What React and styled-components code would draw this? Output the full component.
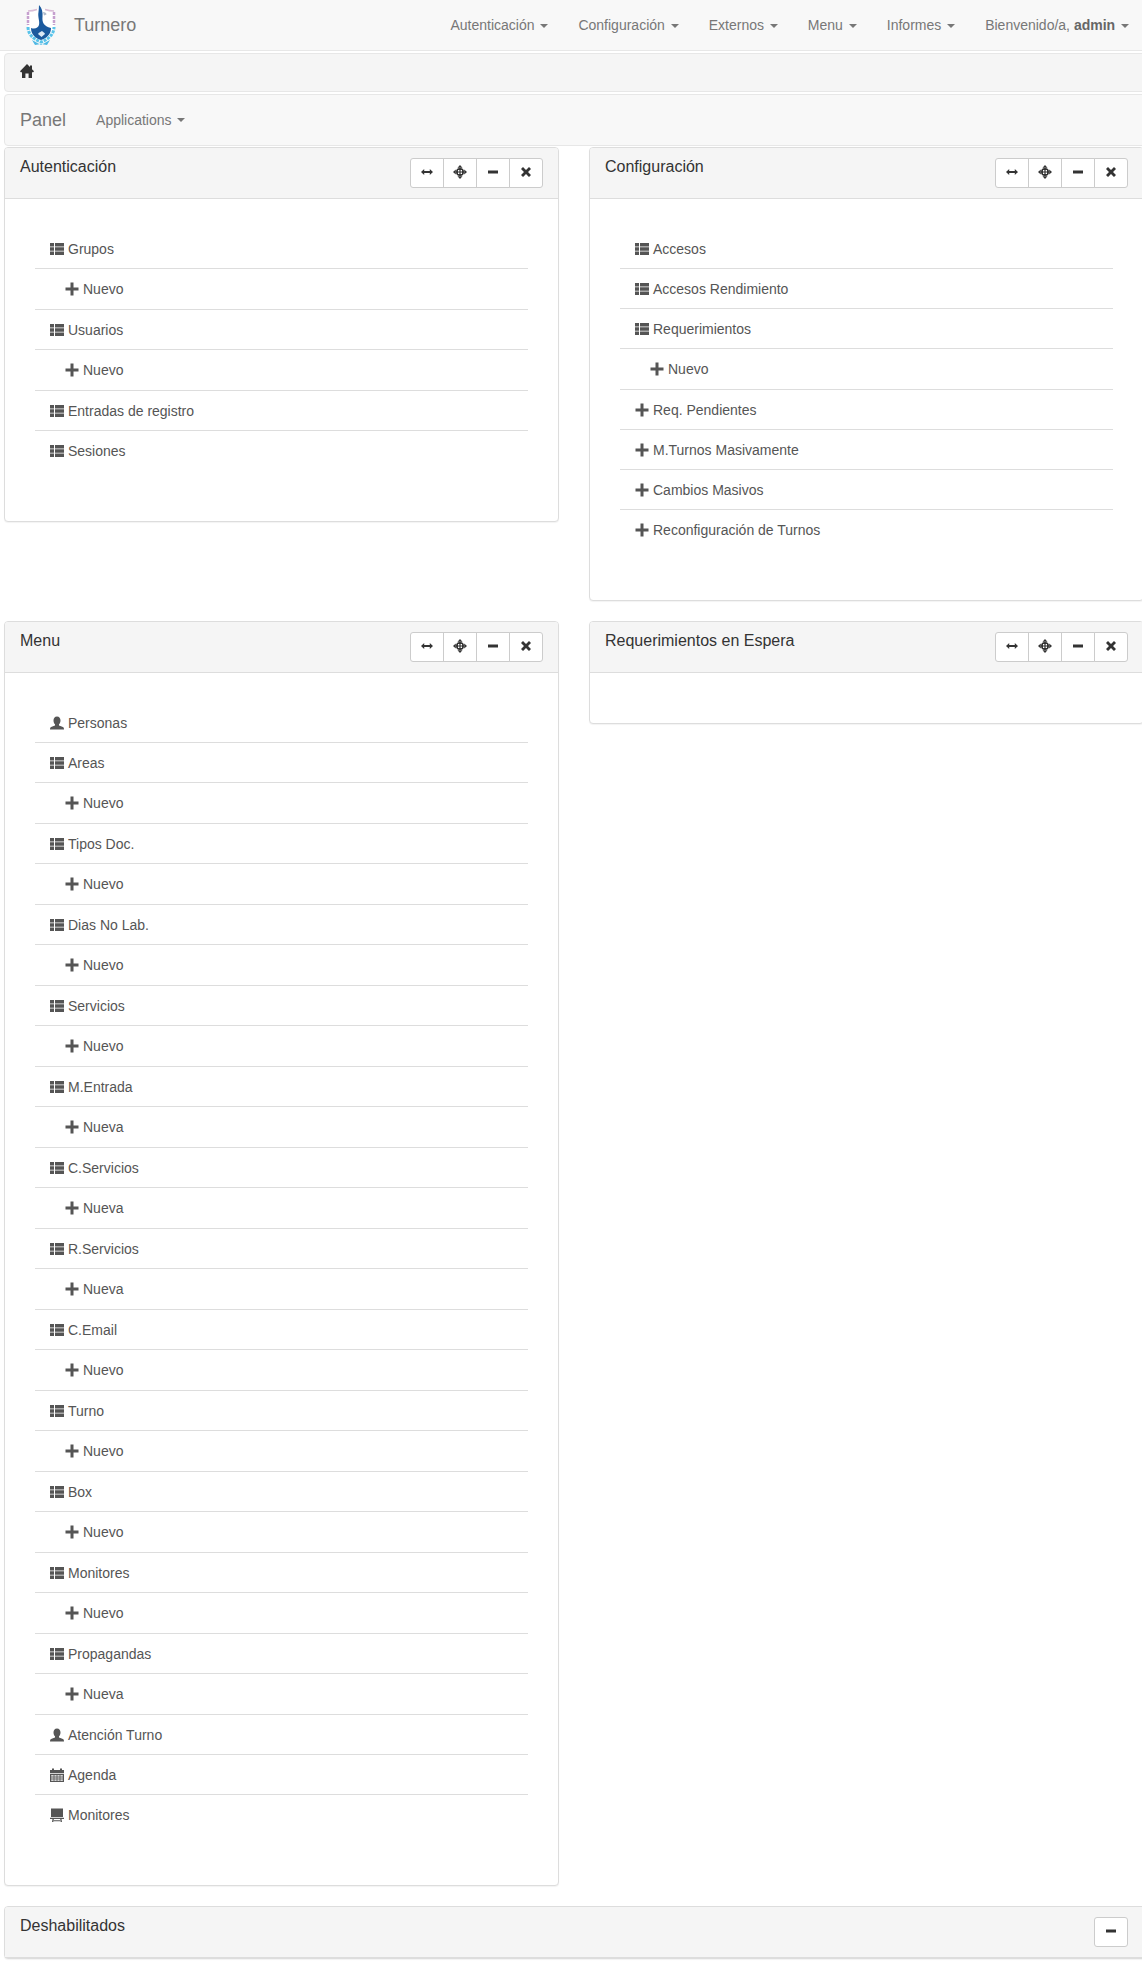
import React from 'react';
import styled, { createGlobalStyle } from 'styled-components';

const GlobalStyle = createGlobalStyle`
  html, body {
    margin: 0;
    padding: 0;
    background: #fff;
    overflow-x: hidden;
  }
  body {
    font-family: "Liberation Sans", Arial, Helvetica, sans-serif;
    font-size: 14px;
    line-height: 20px;
    color: #333;
  }
  * {
    box-sizing: border-box;
  }
`;

const Page = styled.div`
  width: 1142px;
  height: 1969px;
  overflow: hidden;
`;

const Navbar = styled.nav`
  display: flex;
  align-items: center;
  justify-content: space-between;
  height: 51px;
  background: #f8f8f8;
  border-bottom: 1px solid #e7e7e7;
`;

const Brand = styled.div`
  display: flex;
  align-items: center;
  height: 50px;
  padding-left: 24px;
  gap: 16px;
  font-size: 18px;
  color: #777;
`;

const NavList = styled.div`
  display: flex;
  margin-right: -2px;
`;

const NavItem = styled.a`
  padding: 15px;
  color: #777;
  white-space: nowrap;
  b {
    color: #666;
  }
`;

const Caret = styled.span`
  display: inline-block;
  width: 0;
  height: 0;
  margin-left: 2px;
  vertical-align: middle;
  border-top: 4px solid;
  border-right: 4px solid transparent;
  border-left: 4px solid transparent;
`;

const Content = styled.div`
  margin-left: 4px;
  width: 1160px;
`;

const Breadcrumb = styled.div`
  display: flex;
  align-items: center;
  height: 39px;
  margin-top: 2px;
  padding: 0 15px 4px;
  background: #f5f5f5;
  border: 1px solid #e7e7e7;
  border-radius: 4px;
  color: #333;
`;

const SubNav = styled.div`
  display: flex;
  align-items: center;
  height: 52px;
  margin-top: 2px;
  padding-left: 15px;
  background: #f8f8f8;
  border: 1px solid #e7e7e7;
  border-radius: 4px;
  color: #777;
`;

const SubBrand = styled.span`
  font-size: 18px;
  margin-right: 30px;
`;

const PanelGrid = styled.div`
  display: grid;
  grid-template-columns: 555px 555px;
  column-gap: 30px;
  row-gap: 20px;
  align-items: start;
  margin-top: 1px;
`;

const Panel = styled.section`
  background: #fff;
  border: 1px solid #ddd;
  border-radius: 4px;
  box-shadow: 0 1px 1px rgba(0, 0, 0, 0.05);
  width: ${(p) => (p.$wide ? '1160px' : 'auto')};
  margin-top: ${(p) => (p.$wide ? '20px' : '0')};
`;

const PanelHeading = styled.header`
  display: flex;
  justify-content: space-between;
  align-items: flex-start;
  height: 51px;
  padding: 10px 15px;
  background: #f5f5f5;
  border-bottom: 1px solid #ddd;
  border-radius: 3px 3px 0 0;
`;

const PanelTitle = styled.h3`
  margin: 0;
  font-size: 16px;
  font-weight: 400;
  line-height: 18px;
  color: #333;
`;

const WideHeading = styled(PanelHeading)`
  padding-right: 35px;
`;

const ButtonGroup = styled.div`
  display: flex;
`;

const PanelButton = styled.button`
  display: flex;
  align-items: center;
  justify-content: center;
  width: 34px;
  height: 30px;
  padding: 0 0 2px;
  margin-left: -1px;
  background: #fff;
  border: 1px solid #ccc;
  color: #333;
  &:first-child {
    margin-left: 0;
    border-radius: 3px 0 0 3px;
  }
  &:last-child {
    border-radius: 0 3px 3px 0;
  }
  &:only-child {
    border-radius: 3px;
  }
`;

const PanelBody = styled.div`
  padding: 30px 30px ${(p) => p.$bottom}px;
`;

const List = styled.ul`
  list-style: none;
  margin: 0;
  padding: 0;
`;

const Row = styled.li`
  display: flex;
  align-items: center;
  gap: 4px;
  height: ${(p) => (p.$nested ? 41 : 40)}px;
  padding: ${(p) => (p.$nested ? '0 15px 0 30px' : '0 15px')};
  color: #555;
  border-bottom: 1px solid #ddd;
  &:last-child {
    border-bottom: 0;
  }
`;

const Glyph = styled.svg`
  flex: none;
  width: 14px;
  height: 14px;
  fill: currentColor;
`;

const icons = {
  list: 'M0 1h4v3.600H0zM5 1h9v3.600H5zM0 5.200h4v3.600H0zM5 5.200h9v3.600H5zM0 9.400h4V13H0zM5 9.400h9V13H5z',
  plus: 'M5.500 .5h3v5h5v3h-5v5h-3v-5h-5v-3h5z',
  user: 'M7 .5c2.300 0 3.500 1.700 3.500 4 0 1.600-.7 3.100-1.500 3.800v1.200c1.600.6 4 1.100 4.600 2.100.3.600.4 1.200.4 1.900H0c0-.7.1-1.300.4-1.900.6-1 3-1.500 4.600-2.100V8.300C4.200 7.600 3.500 6.100 3.500 4.500c0-2.300 1.200-4 3.500-4z',
  calendar: 'M0 2h2V.5h2V2h6V.5h2V2h2v3.200H0zM0 6h14v8H0zM1.200 7.200v1.200h2.400V7.200zM4.400 7.200v1.200h2.200V7.200zM7.400 7.200v1.200h2.200V7.200zM10.400 7.200v1.200h2.400V7.200zM1.200 9.400v1.200h2.400V9.400zM4.400 9.400v1.200h2.200V9.400zM7.400 9.400v1.200h2.200V9.400zM10.400 9.400v1.200h2.400V9.400zM1.200 11.600v1.200h2.400v-1.200zM4.400 11.600v1.200h2.200v-1.200zM7.400 11.600v1.200h2.200v-1.200zM10.400 11.600v1.200h2.400v-1.200z',
  board: 'M1 .5h12V9H1zM0 9.700h14V11H0zM2.500 11h1.300l-.4 3H2zM10.200 11h1.300l.5 3h-1.400zM3.800 12.200h6.300v1H3.800z',
  home: 'M7 0l3 3V1.500h2v3.700L14 7.300l-.8.9H12V14H8.600V9.500H5.400V14H2V8.200H.8L0 7.300z',
  resize: 'M1 7l3.200-3v2.100h5.600V4L13 7l-3.200 3V7.900H4.200V10z',
  move: 'M7 0l2.500 2.800h-5zM7 14l-2.500-2.800h5zM0 7l2.800-2.500v5zM14 7l-2.800 2.500v-5zM7 3a4 4 0 1 1 0 8a4 4 0 1 1 0-8zM5 5h1.400v1.400H5zM7.600 5H9v1.400H7.600zM5 7.600h1.400V9H5zM7.600 7.600H9V9H7.600z',
  minus: 'M2 5.500h10v3H2z',
  remove: 'M4 2l3 3 3-3 2 2-3 3 3 3-2 2-3-3-3 3-2-2 3-3-3-3z',
};

function Icon({ name }) {
  return (
    <Glyph viewBox="0 0 14 14" aria-hidden="true">
      <path fillRule="evenodd" d={icons[name]} />
    </Glyph>
  );
}

function Logo() {
  return (
    <svg width="34" height="44" viewBox="0 0 34 44" aria-hidden="true">
      <path d="M4 8c4 0 8-1 9-2h8c1 1 5 2 9 2v16c0 6-4 11-13 14C8 35 4 30 4 24z" fill="#fff" />
      <path d="M4 8c3 0 6-.5 9-1.500M30 8c-3 0-6-.5-9-1.500" stroke="#d9bcd6" strokeWidth="1.500" fill="none" />
      <path d="M4 9v13M30 9v13" stroke="#c6a0cf" strokeWidth="2.500" strokeDasharray="3 1" fill="none" />
      <path d="M4 24c0 7 5 12 13 15 8-3 13-8 13-15" stroke="#58c3ea" strokeWidth="3" strokeDasharray="3 1" fill="none" />
      <path d="M7 25c4 1.500 7 0 8-3 1-4-1.500-8-.5-13 .3-2.500.5-5 .5-7 3 3 4 7 3.500 12-.5 5 1 9 8.500 11 0 6-4 10-10 12-6-2-10-6-10-12z" fill="#1b5a9e" />
      <path d="M14 31c1-2 3-2 4-3 1 1 3 2 3 3l-3.500 3z" fill="#dce9f4" />
      <path d="M19 9c2 0 3.500 1 3.500 2.500L20 12.500z" fill="#aebacb" />
      <path d="M8 37l9 5 9-5-3 5-6-1-6 1z" fill="#4fb8e4" />
    </svg>
  );
}

const navItems = ['Autenticación', 'Configuración', 'Externos', 'Menu', 'Informes'];

const n = (label) => ({ label, nested: true, icon: 'plus' });
const l = (label, icon = 'list') => ({ label, icon });

const authRows = [
  l('Grupos'), n('Nuevo'), l('Usuarios'), n('Nuevo'), l('Entradas de registro'), l('Sesiones'),
];

const configRows = [
  l('Accesos'), l('Accesos Rendimiento'), l('Requerimientos'), n('Nuevo'),
  l('Req. Pendientes', 'plus'), l('M.Turnos Masivamente', 'plus'), l('Cambios Masivos', 'plus'),
  l('Reconfiguración de Turnos', 'plus'),
];

const menuRows = [
  l('Personas', 'user'),
  l('Areas'), n('Nuevo'),
  l('Tipos Doc.'), n('Nuevo'),
  l('Dias No Lab.'), n('Nuevo'),
  l('Servicios'), n('Nuevo'),
  l('M.Entrada'), n('Nueva'),
  l('C.Servicios'), n('Nueva'),
  l('R.Servicios'), n('Nueva'),
  l('C.Email'), n('Nuevo'),
  l('Turno'), n('Nuevo'),
  l('Box'), n('Nuevo'),
  l('Monitores'), n('Nuevo'),
  l('Propagandas'), n('Nueva'),
  l('Atención Turno', 'user'),
  l('Agenda', 'calendar'),
  l('Monitores', 'board'),
];

function PanelTools() {
  return (
    <ButtonGroup>
      {['resize', 'move', 'minus', 'remove'].map((name) => (
        <PanelButton key={name}>
          <Icon name={name} />
        </PanelButton>
      ))}
    </ButtonGroup>
  );
}

function ListPanel({ title, rows, bottom = 50 }) {
  return (
    <Panel>
      <PanelHeading>
        <PanelTitle>{title}</PanelTitle>
        <PanelTools />
      </PanelHeading>
      <PanelBody $bottom={bottom}>
        <List>
          {rows.map((row, i) => (
            <Row key={i} $nested={row.nested}>
              <Icon name={row.icon} />
              {row.label}
            </Row>
          ))}
        </List>
      </PanelBody>
    </Panel>
  );
}

export default function App() {
  return (
    <Page>
      <GlobalStyle />
      <Navbar>
        <Brand>
          <Logo />
          Turnero
        </Brand>
        <NavList>
          {navItems.map((item) => (
            <NavItem key={item}>
              {item} <Caret />
            </NavItem>
          ))}
          <NavItem>
            Bienvenido/a, <b>admin</b> <Caret />
          </NavItem>
        </NavList>
      </Navbar>
      <Content>
        <Breadcrumb>
          <Icon name="home" />
        </Breadcrumb>
        <SubNav>
          <SubBrand>Panel</SubBrand>
          Applications&nbsp;<Caret />
        </SubNav>
        <PanelGrid>
          <ListPanel title="Autenticación" rows={authRows} />
          <ListPanel title="Configuración" rows={configRows} />
          <ListPanel title="Menu" rows={menuRows} />
          <ListPanel title="Requerimientos en Espera" rows={[]} bottom={20} />
        </PanelGrid>
        <Panel $wide>
          <WideHeading>
            <PanelTitle>Deshabilitados</PanelTitle>
            <ButtonGroup>
              <PanelButton>
                <Icon name="minus" />
              </PanelButton>
            </ButtonGroup>
          </WideHeading>
        </Panel>
      </Content>
    </Page>
  );
}
